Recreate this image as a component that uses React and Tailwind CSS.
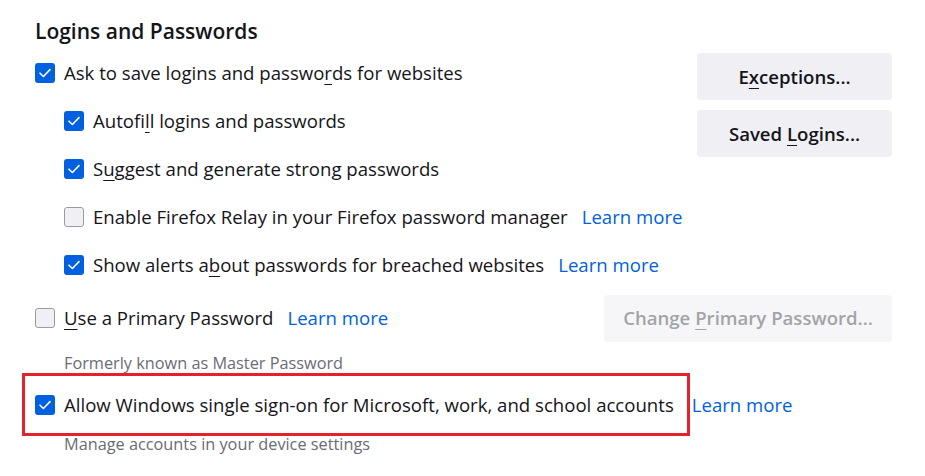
import React from 'react';

const Check = ({ checked }) =>
  checked ? (
    <span className="flex h-[20px] w-[20px] shrink-0 items-center justify-center rounded-[3px] bg-[#0061e0]">
      <svg width="14" height="14" viewBox="0 0 14 14" fill="none">
        <path d="M2 7.2 L5.4 10.5 L12 3.6" stroke="white" strokeWidth="1.6" strokeLinecap="round" strokeLinejoin="round" />
      </svg>
    </span>
  ) : (
    <span className="h-[20px] w-[20px] shrink-0 rounded-[3px] border border-[#9a9aa6] bg-[#f0f0f4]" />
  );

const Link = () => <span className="ml-[14px] text-[#0061e0]">Learn more</span>;

const Row = ({ checked, indent, children }) => (
  <div className={`flex h-[48px] items-center ${indent ? 'pl-[29px]' : ''}`}>
    <Check checked={checked} />
    <div className="ml-[9px] flex items-center">{children}</div>
  </div>
);

const Btn = ({ children, disabled }) => (
  <div
    className={`flex h-[47px] items-center justify-center rounded-[4px] font-semibold ${
      disabled ? 'bg-[#f6f6f8] text-[#a3a3a8]' : 'bg-[#f0f0f4] text-[#15141a]'
    }`}
  >
    <span>{children}</span>
  </div>
);

export default function App() {
  return (
    <div className="h-[476px] w-[925px] bg-white pl-[35px] pr-[33px] pt-[16px] text-[18.6px] text-[#15141a]" style={{ fontFamily: '"Open Sans", sans-serif' }}>
      <h2 className="h-[33px] text-[21px] font-semibold leading-[30px]">Logins and Passwords</h2>

      <div className="flex justify-between">
        <div>
          <Row checked>
            <span>Ask to save logins and passwo<u className="underline-offset-4">r</u>ds for websites</span>
          </Row>
          <Row checked indent>
            <span>Autofi<u className="underline-offset-4">l</u>l logins and passwords</span>
          </Row>
          <Row checked indent>
            <span>S<u className="underline-offset-4">u</u>ggest and generate strong passwords</span>
          </Row>
          <Row indent>
            <span>Enable Firefox Relay in your Firefox password manager</span>
            <Link />
          </Row>
          <Row checked indent>
            <span>Show alerts a<u className="underline-offset-4">b</u>out passwords for breached websites</span>
            <Link />
          </Row>
        </div>
        <div className="flex w-[195px] flex-col gap-[10px] pt-[4px]">
          <Btn>
            E<u className="underline-offset-4">x</u>ceptions...
          </Btn>
          <Btn>
            Saved <u className="underline-offset-4">L</u>ogins...
          </Btn>
        </div>
      </div>

      <div className="mt-[5px] flex items-center justify-between">
        <Row>
          <span>
            <u className="underline-offset-4">U</u>se a Primary Password
          </span>
          <Link />
        </Row>
        <div className="w-[288px]">
          <Btn disabled>
            Change <u className="underline-offset-4">P</u>rimary Password...
          </Btn>
        </div>
      </div>

      <div className="mt-[10px] pl-[29px] text-[16.3px] leading-[22px] text-[#6b6b75]">Formerly known as Master Password</div>

      <div className="mt-[-1px] flex items-center">
        <div className="-ml-[13px] flex h-[63px] items-center border-[3px] border-[#e3222b] pl-[10px] pr-[13px]">
          <Check checked />
          <span className="ml-[9px]">Allow Windows single sign-on for Microsoft, work, and school accounts</span>
        </div>
        <span className="ml-[2px] text-[#0061e0]">Learn more</span>
      </div>

      <div className="mt-[-3px] pl-[29px] text-[16.3px] leading-[22px] text-[#6b6b75]">Manage accounts in your device settings</div>
    </div>
  );
}
